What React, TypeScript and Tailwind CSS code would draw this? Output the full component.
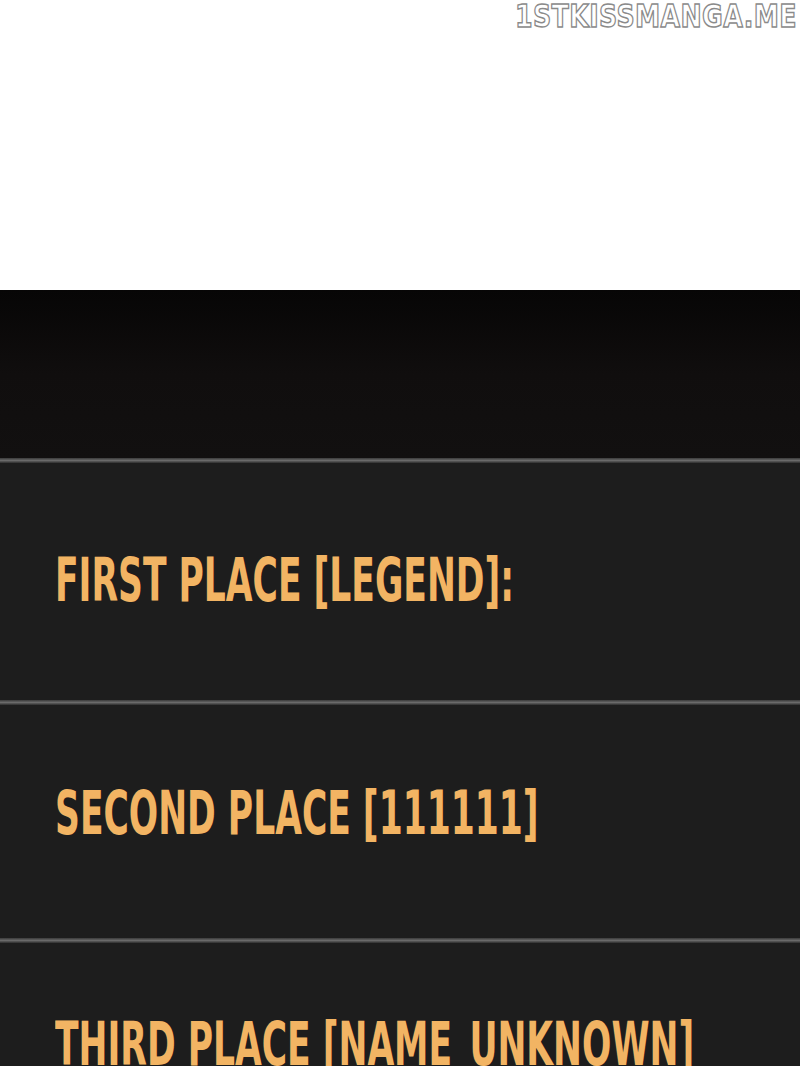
export default function App() {
  const rows = [
    { label: "FIRST PLACE [LEGEND]:", box: "h-[237px] pt-[87px]" },
    { label: "SECOND PLACE [111111]", box: "h-[233px] pt-[78px]" },
    { label: "THIRD PLACE [NAME_UNKNOWN]", box: "h-[123px] pt-[71px]" },
  ];

  return (
    <div className="w-[800px] h-[1066px] overflow-hidden bg-white flex flex-col">
      {/* white panel with site watermark */}
      <div className="h-[290px] shrink-0 flex justify-end items-start pr-[3px] pt-[1px]">
        <span
          className="text-[32px] leading-[30px] font-bold tracking-[0.5px] text-white origin-right scale-x-[0.79] whitespace-nowrap [-webkit-text-stroke:1.5px_#8a8a8a]"
          style={{ fontFamily: '"DejaVu Sans", sans-serif' }}
        >
          1STKISSMANGA.ME
        </span>
      </div>

      {/* dark top band */}
      <div className="h-[168px] shrink-0 bg-gradient-to-b from-[#070606] via-[#100e0e] to-[#121010]" />

      {rows.map((r, i) => (
        <div key={i} className="flex flex-col shrink-0">
          <div className="h-[5px] bg-gradient-to-b from-[#3a3a3a] via-[#6a6a6a] to-[#2e2e2e]" />
          <div className={`${r.box} bg-[#1d1d1d] flex items-start pl-[55px] overflow-hidden`}>
            <span
              className="text-[#f2b463] text-[60px] leading-none font-bold origin-left scale-x-[0.64] whitespace-nowrap"
              style={{ fontFamily: '"DejaVu Sans Condensed", "Liberation Sans Narrow", sans-serif' }}
            >
              {r.label}
            </span>
          </div>
        </div>
      ))}
    </div>
  );
}
